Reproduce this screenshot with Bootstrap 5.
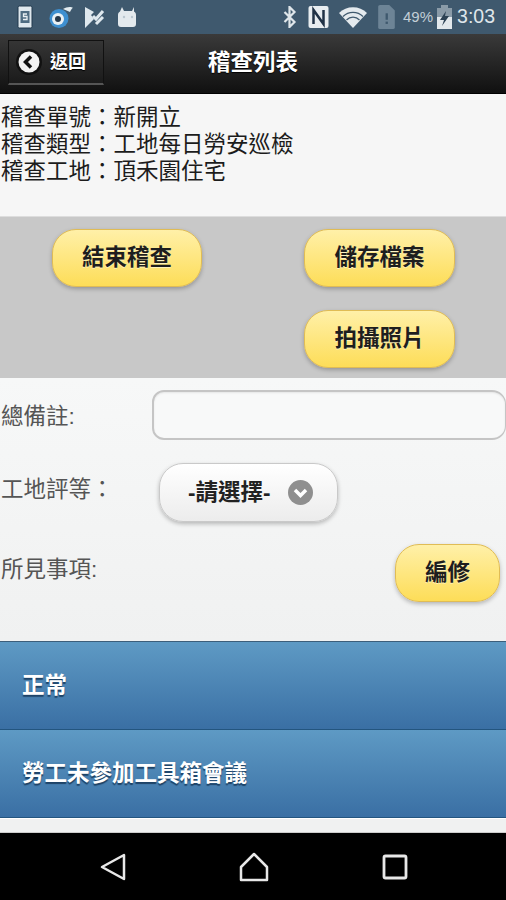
<!DOCTYPE html>
<html lang="zh-Hant">
<head>
  <meta charset="UTF-8">
  <title>稽查列表</title>
  <meta name="viewport" content="width=device-width, initial-scale=1">
  <link href="https://cdn.jsdelivr.net/npm/bootstrap@5.3.0/dist/css/bootstrap.min.css" rel="stylesheet">
  <style>
    html, body { height: 900px; overflow: hidden; }
    body {
      background: #f2f3f3;
      color: #222;
      font-family: "Liberation Sans", "Noto Sans CJK TC", sans-serif;
    }
    /* status bar */
    .status-bar { height: 34px; background: #3f596e; color: #dfe6ea; padding: 0 11px 0 17px; }
    .status-pct { font-size: 15px; margin-left: 8px; color: #c3ced6; }
    .status-time { font-size: 19.5px; margin-left: 5px; }
    .gap-a { margin-left: 14px; }
    .gap-b { margin-left: 11px; }
    .gap-c { margin-left: 13px; }
    .gap-d { margin-left: 10px; }
    .gap-e { margin-left: 9px; }
    .gap-f { margin-left: 4px; }
    /* header */
    .top-bar {
      height: 60px;
      background: linear-gradient(#3a3a3a, #101010);
      border-bottom: 1px solid #000;
      padding: 6px 0 0 8px;
    }
    .back-btn {
      width: 96px; height: 45px;
      background: linear-gradient(#353535, #1b1b1b);
      border: 1px solid #111;
      border-bottom: 2px solid #555;
      color: #fff; font-size: 18px; font-weight: 700;
      padding: 0 0 0 7px; gap: 8px;
      text-shadow: 0 1px 1px #000;
    }
    .top-title {
      left: 0; right: 0; top: 12px;
      color: #fff; font-size: 22.5px; font-weight: 700; text-align: center;
      text-shadow: 0 1px 1px #000;
    }
    /* info block */
    .info-block { height: 122px; background: #f6f6f6; padding: 10px 0 0 1px; font-size: 22.5px; line-height: 27px; color: #1c1c1c; }
    /* yellow action panel */
    .action-panel { height: 162px; background: #c8c8c8; border-top: 1px solid #ddd; padding-top: 12px; }
    .action-row { height: 81px; }
    .yellow-btn {
      height: 58px; border-radius: 24px;
      background: linear-gradient(#fff0a8, #fddd58);
      border: 1px solid #e0bc55;
      box-shadow: 0 2px 4px rgba(0,0,0,.25);
      color: #1e1e1e; font-size: 22.5px; font-weight: 700; padding: 0;
      text-shadow: 0 1px 0 rgba(255,255,255,.5);
    }
    .btn-end { width: 150px; margin-left: 52px; }
    .btn-store { width: 151px; margin-left: 102px; }
    .btn-photo { width: 151px; margin-left: 304px; }
    .btn-edit { width: 105px; margin-right: 6px; }
    /* form */
    .form-area { height: 263px; padding-top: 12px; background: linear-gradient(#f7f8f8, #f0f1f1); font-size: 22.5px; color: #555; }
    .form-label-text { padding-left: 1px; line-height: 27px; width: 152px; flex: none; }
    .note-row { height: 50px; }
    .note-row .form-label-text { margin-top: 2px; }
    .rate-row { margin-top: 23px; }
    .rate-row .form-label-text { margin-top: -6px; }
    .seen-row { margin-top: 22px; }
    .seen-row .form-label-text { margin-top: 12px; }
    .note-input {
      width: 354px; height: 50px;
      background: #f8f9f9; border: 2px solid #c5c5c5; border-right-width: 1px; border-radius: 12px 14px 14px 12px;
      box-shadow: inset 0 1px 2px rgba(0,0,0,.08);
    }
    .pick-btn {
      width: 179px; height: 59px; margin-left: 7px; border-radius: 24px;
      background: linear-gradient(#fff, #ececec);
      border: 1px solid #c9c9c9;
      box-shadow: 0 2px 4px rgba(0,0,0,.25);
      color: #222; font-size: 22.5px; font-weight: 700; padding: 0 0 0 28px; gap: 17px;
    }
    .pick-icon { width: 25px; height: 25px; border-radius: 50%; background: #8f8f8f; }
    /* blue list */
    .blue-list { border-top: 1px solid #3c5e7a; }
    .blue-item {
      height: 88px; padding-left: 22px;
      background: linear-gradient(#5e9ac4, #3a6fa4);
      border-bottom: 1px solid #23557f;
      color: #fff; font-size: 22.5px; font-weight: 700;
      text-shadow: 0 2px 1px #1d4266;
    }
    .list-tail { height: 15px; background: #f0f1f1; border-top: 1px solid #fff; border-bottom: 1px solid #ccc; }
    /* android nav */
    .nav-strip { height: 67px; background: #000; padding-left: 100px; padding-right: 98px; }
  </style>
</head>
<body>
  <!-- Status bar -->
  <div class="status-bar d-flex align-items-center">
    <svg width="17" height="24" viewBox="0 0 17 24"><rect x="1" y="1" width="14" height="22" rx="1.5" fill="#dfe8ee" stroke="#20384c"/><rect x="3.500" y="6" width="9" height="12" fill="#4f6c82"/><path d="M10 9H6.500v2.500H10V14.500H6" fill="none" stroke="#e8eef2" stroke-width="1.300"/></svg>
    <svg class="gap-a" width="25" height="22" viewBox="0 0 25 22"><path d="M15 3c3-2 8-3 10-1-1 0-2 2-3 4z" fill="#e4ecf0"/><circle cx="11" cy="12.500" r="9.500" fill="#3e8fd0"/><circle cx="10" cy="13" r="6" fill="#e9f0f4"/><circle cx="10" cy="13" r="3" fill="#26384a"/></svg>
    <svg class="gap-b" width="21" height="23" viewBox="0 0 21 23"><path d="M1 1l9 5-3 3 3 4-9 9z" fill="#dfe8ee"/><path d="M9 10l3 3 7-8M12 18l7-7" fill="none" stroke="#dfe8ee" stroke-width="3"/></svg>
    <svg class="gap-c" width="20" height="22" viewBox="0 0 20 22"><path d="M4 1l2 4h8l2-4v4.500c1.500 1 2 2 2 3.500v9c0 2-1 3-3 3H3c-2 0-3-1-3-3V9c0-1.500.5-2.500 2-3.500z" fill="#e3e9ed"/><circle cx="6" cy="11" r="1.200" fill="#b9c6cf"/><circle cx="14" cy="11" r="1.200" fill="#b9c6cf"/></svg>
    <svg class="ms-auto" width="15" height="22" viewBox="0 0 14 22"><path d="M2 6l10 10-5 5V1l5 5L2 16" fill="none" stroke="#dfe6ea" stroke-width="2.200"/></svg>
    <svg class="gap-d" width="23" height="24" viewBox="0 0 22 24"><rect x="1" y="1" width="20" height="22" rx="2" fill="#e8edf0"/><path d="M6 19V5l10 14V5" fill="none" stroke="#203246" stroke-width="2.500"/></svg>
    <svg class="gap-e" width="28" height="22" viewBox="0 0 28 22"><path d="M0 7a20 20 0 0 1 28 0L14 22z" fill="#e4eaee"/><path d="M4 10.500a14 14 0 0 1 20 0M7.500 14a9 9 0 0 1 13 0" fill="none" stroke="#3f596e" stroke-width="1.200"/></svg>
    <svg class="gap-b" width="17" height="24" viewBox="0 0 18 26"><path d="M2 0h10l6 6v18a2 2 0 0 1-2 2H2a2 2 0 0 1-2-2V2a2 2 0 0 1 2-2z" fill="#6d8496"/><rect x="8" y="9" width="2.500" height="7" fill="#3f596e"/><rect x="8" y="18" width="2.500" height="2.500" fill="#3f596e"/></svg>
    <span class="status-pct">49%</span>
    <svg class="gap-f" width="15" height="24" viewBox="0 0 15 24"><rect x="0" y="3" width="15" height="21" fill="#e2e8ec"/><rect x="4" y="0" width="7" height="3" fill="#8a9ba8"/><rect x="0" y="3" width="15" height="9" fill="#8a9ba8"/><path d="M9 6L3 15h4l-2 6 7-10H8z" fill="#2c4254"/></svg>
    <span class="status-time">3:03</span>
  </div>

  <!-- Header -->
  <div class="top-bar position-relative">
    <button class="back-btn btn rounded-0 d-flex align-items-center" type="button">
      <svg width="26" height="26" viewBox="0 0 26 26"><circle cx="13" cy="13" r="13" fill="#111"/><circle cx="13" cy="13" r="10.500" fill="#f2f2f2"/><path d="M15 7.500L9.500 13l5.500 5.500" fill="none" stroke="#111" stroke-width="3.500"/></svg>
      <span>返回</span>
    </button>
    <div class="top-title position-absolute">稽查列表</div>
  </div>

  <!-- Info -->
  <div class="info-block">
    <div>稽查單號：新開立</div>
    <div>稽查類型：工地每日勞安巡檢</div>
    <div>稽查工地：頂禾園住宅</div>
  </div>

  <!-- Actions -->
  <div class="action-panel">
    <div class="action-row d-flex">
      <button class="yellow-btn btn btn-end" type="button">結束稽查</button>
      <button class="yellow-btn btn btn-store" type="button">儲存檔案</button>
    </div>
    <div class="action-row d-flex">
      <button class="yellow-btn btn btn-photo" type="button">拍攝照片</button>
    </div>
  </div>

  <!-- Form -->
  <div class="form-area">
    <div class="note-row d-flex align-items-center">
      <div class="form-label-text">總備註:</div>
      <input class="note-input" type="text">
    </div>
    <div class="rate-row d-flex align-items-center">
      <div class="form-label-text">工地評等：</div>
      <button class="pick-btn btn d-flex align-items-center" type="button">
        <span>-請選擇-</span>
        <span class="pick-icon d-flex align-items-center justify-content-center">
          <svg width="17" height="17" viewBox="0 0 17 17"><path d="M3 6l5.500 5.500L14 6" fill="none" stroke="#fff" stroke-width="3.500"/></svg>
        </span>
      </button>
    </div>
    <div class="seen-row d-flex justify-content-between">
      <div class="form-label-text">所見事項:</div>
      <button class="yellow-btn btn btn-edit" type="button">編修</button>
    </div>
  </div>

  <!-- Blue list -->
  <div class="blue-list">
    <div class="blue-item d-flex align-items-center">正常</div>
    <div class="blue-item d-flex align-items-center">勞工未參加工具箱會議</div>
  </div>
  <div class="list-tail"></div>

  <!-- Android nav -->
  <div class="nav-strip d-flex align-items-center justify-content-between">
    <svg width="26" height="28" viewBox="0 0 26 28"><path d="M24 2v24L2 14z" fill="none" stroke="#e8e8e8" stroke-width="2.500" stroke-linejoin="round"/></svg>
    <svg width="30" height="30" viewBox="0 0 30 30"><path d="M15 2L2 15v13h26V15z" fill="none" stroke="#e8e8e8" stroke-width="2.500" stroke-linejoin="round"/></svg>
    <svg width="26" height="26" viewBox="0 0 26 26"><rect x="2" y="2" width="22" height="22" rx="1.500" fill="none" stroke="#e8e8e8" stroke-width="2.800"/></svg>
  </div>

  <script src="https://cdn.jsdelivr.net/npm/bootstrap@5.3.0/dist/js/bootstrap.bundle.min.js"></script>
</body>
</html>
